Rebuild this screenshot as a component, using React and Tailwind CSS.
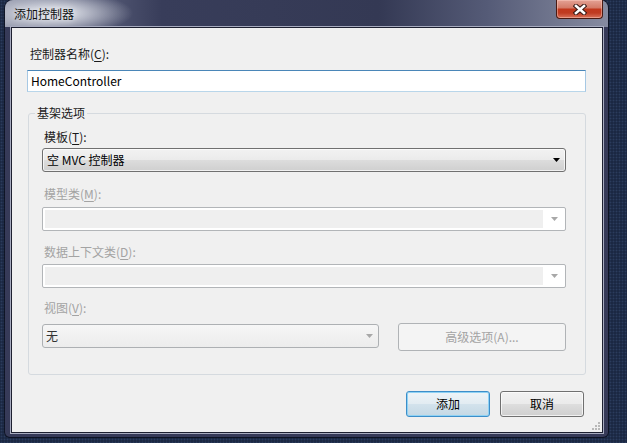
import React from 'react';

const font = "font-['Noto_Sans_CJK_SC','Noto_Sans',sans-serif]";

function Arrow({ color }) {
  return (
    <svg width="7" height="4" viewBox="0 0 7 4" className="shrink-0">
      <path d="M0 0H7L3.5 4Z" fill={color} />
    </svg>
  );
}

function Label({ text, hotkey, disabled, className = '' }) {
  return (
    <div className={`text-[12px] leading-[16px] ${disabled ? 'text-[#a3a3a3]' : 'text-[#1a1a1a]'} ${className}`}>
      {text}(<span className="underline underline-offset-2">{hotkey}</span>):
    </div>
  );
}

function DisabledSelect({ className = '' }) {
  return (
    <div className={`flex h-[24px] w-[524px] rounded-[2px] border border-[#b2b5b8] bg-white p-[2px] ${className}`}>
      <div className="flex-1 bg-[#efefef]" />
      <div className="flex w-[20px] items-center justify-center pl-[2px]">
        <Arrow color="#a8a8a8" />
      </div>
    </div>
  );
}

function CloseGlyph() {
  return (
    <svg width="14" height="11" viewBox="0 0 14 11">
      <path d="M3 2L11 9M11 2L3 9" stroke="#3a1a16" strokeWidth="4.6" strokeLinecap="square" />
      <path d="M3 2L11 9M11 2L3 9" stroke="#ffffff" strokeWidth="2.6" strokeLinecap="square" />
    </svg>
  );
}

function Grip() {
  return (
    <svg width="10" height="10" viewBox="0 0 10 10">
      {[[7, 1], [4, 4], [7, 4], [1, 7], [4, 7], [7, 7]].map(([x, y]) => (
        <rect key={`${x}-${y}`} x={x} y={y} width="2" height="2" fill="#b8b8b8" />
      ))}
    </svg>
  );
}

export default function App() {
  return (
    <div className={`relative h-[443px] w-[627px] overflow-hidden bg-[#1b2843] bg-[radial-gradient(#2b3c5d_0.8px,transparent_1.1px)] bg-[length:3px_3px] ${font}`}>
      {/* window */}
      <div className="absolute left-[5px] top-0 flex h-[437px] w-[603px] flex-col rounded-t-[8px] rounded-b-[5px] bg-[#363a58] shadow-[0_0_0_1px_rgba(10,14,28,0.8)]">
        {/* title bar */}
        <div className="relative flex h-[27px] shrink-0 items-center rounded-t-[8px] bg-[radial-gradient(ellipse_80px_22px_at_48px_13px,rgba(214,217,226,0.95)_25%,rgba(214,217,226,0)_100%),linear-gradient(90deg,#8d92a6_0%,#5a5f7b_14%,#383d5a_26%,#343954_62%,#555b77_80%,#868ba0_100%)] pl-[9px]">
          <span className="text-[12px] leading-[16px] text-[#111] [text-shadow:0_0_6px_rgba(255,255,255,0.8)]">添加控制器</span>
          <div className="absolute right-[5px] top-0 flex h-[19px] w-[47px] items-center justify-center rounded-b-[4px] border border-t-0 border-[#4a1a12] bg-[linear-gradient(#e4a295_0%,#d47c69_42%,#c1381d_52%,#bf3b21_72%,#d9725a_100%)] shadow-[inset_0_0_0_1px_rgba(255,210,200,0.45)]">
            <CloseGlyph />
          </div>
        </div>

        {/* client area */}
        <div className="relative ml-[6px] flex h-[406px] w-[592px] flex-col border border-[#1d2030] bg-[#f0f0f0] pl-[15px] ring-1 ring-[#a7abbf]">
          <Label text="控制器名称" hotkey="C" className="ml-[3px] mt-[18px]" />
          <div className="mt-[8px] flex h-[22px] w-[559px] items-center border border-[#a6c8e4] border-t-[#4a86b8] border-b-[#b9d6ea] bg-white pl-[3px] text-[12px] leading-[16px] text-black">
            HomeController
          </div>

          {/* group box */}
          <div className="relative ml-[1px] mt-[21px] flex h-[262px] w-[558px] flex-col rounded-[3px] border border-[#d5dadf] pl-[13px]">
            <span className="absolute -top-[9px] left-[6px] bg-[#f0f0f0] px-[2px] text-[12px] leading-[16px] text-[#1a1a1a]">基架选项</span>

            <Label text="模板" hotkey="T" className="ml-[2px] mt-[15px]" />
            <div className="mt-[3px] flex h-[24px] w-[524px] items-center rounded-[3px] border border-[#707070] bg-[linear-gradient(#f2f2f2_0%,#ebebeb_48%,#dcdcdc_52%,#cfcfcf_100%)] pl-[4px] pr-[5px] shadow-[inset_0_0_0_1px_rgba(255,255,255,0.7)]">
              <span className="flex-1 text-[12px] leading-[16px] text-black">空 MVC 控制器</span>
              <Arrow color="#000" />
            </div>

            <Label text="模型类" hotkey="M" disabled className="ml-[2px] mt-[14px]" />
            <DisabledSelect className="mt-[5px]" />

            <Label text="数据上下文类" hotkey="D" disabled className="ml-[2px] mt-[13px]" />
            <DisabledSelect className="mt-[4px]" />

            <Label text="视图" hotkey="V" disabled className="ml-[2px] mt-[12px]" />
            <div className="mt-[7px] flex items-start gap-[19px]">
              <div className="mt-[1px] flex h-[24px] w-[337px] items-center rounded-[3px] border border-[#adb0b3] bg-[linear-gradient(#f6f6f6,#ececec)] pl-[3px] pr-[5px]">
                <span className="flex-1 text-[12px] leading-[16px] text-[#333]">无</span>
                <Arrow color="#a8a8a8" />
              </div>
              <div className="flex h-[28px] w-[168px] items-center justify-center rounded-[3px] border border-[#b0b3b6] bg-[#f4f4f4] text-[12px] leading-[16px] text-[#a3a3a3]">
                高级选项(A)...
              </div>
            </div>
          </div>

          {/* buttons */}
          <div className="mt-[16px] flex justify-end gap-[10px] pr-[18px]">
            <div className="flex h-[26px] w-[84px] items-center justify-center rounded-[3px] border border-[#3c8ec9] bg-[linear-gradient(#eef4f8_0%,#e2ecf2_48%,#d2e2ec_52%,#c4d8e4_100%)] text-[12px] leading-[16px] text-black shadow-[inset_0_0_0_1px_#8fd2f4]">
              添加
            </div>
            <div className="flex h-[26px] w-[84px] items-center justify-center rounded-[3px] border border-[#707070] bg-[linear-gradient(#f2f2f2_0%,#ebebeb_48%,#dddddd_52%,#cfcfcf_100%)] text-[12px] leading-[16px] text-black shadow-[inset_0_0_0_1px_rgba(255,255,255,0.7)]">
              取消
            </div>
          </div>

          <div className="absolute bottom-[1px] right-[1px]">
            <Grip />
          </div>
        </div>
      </div>
    </div>
  );
}
